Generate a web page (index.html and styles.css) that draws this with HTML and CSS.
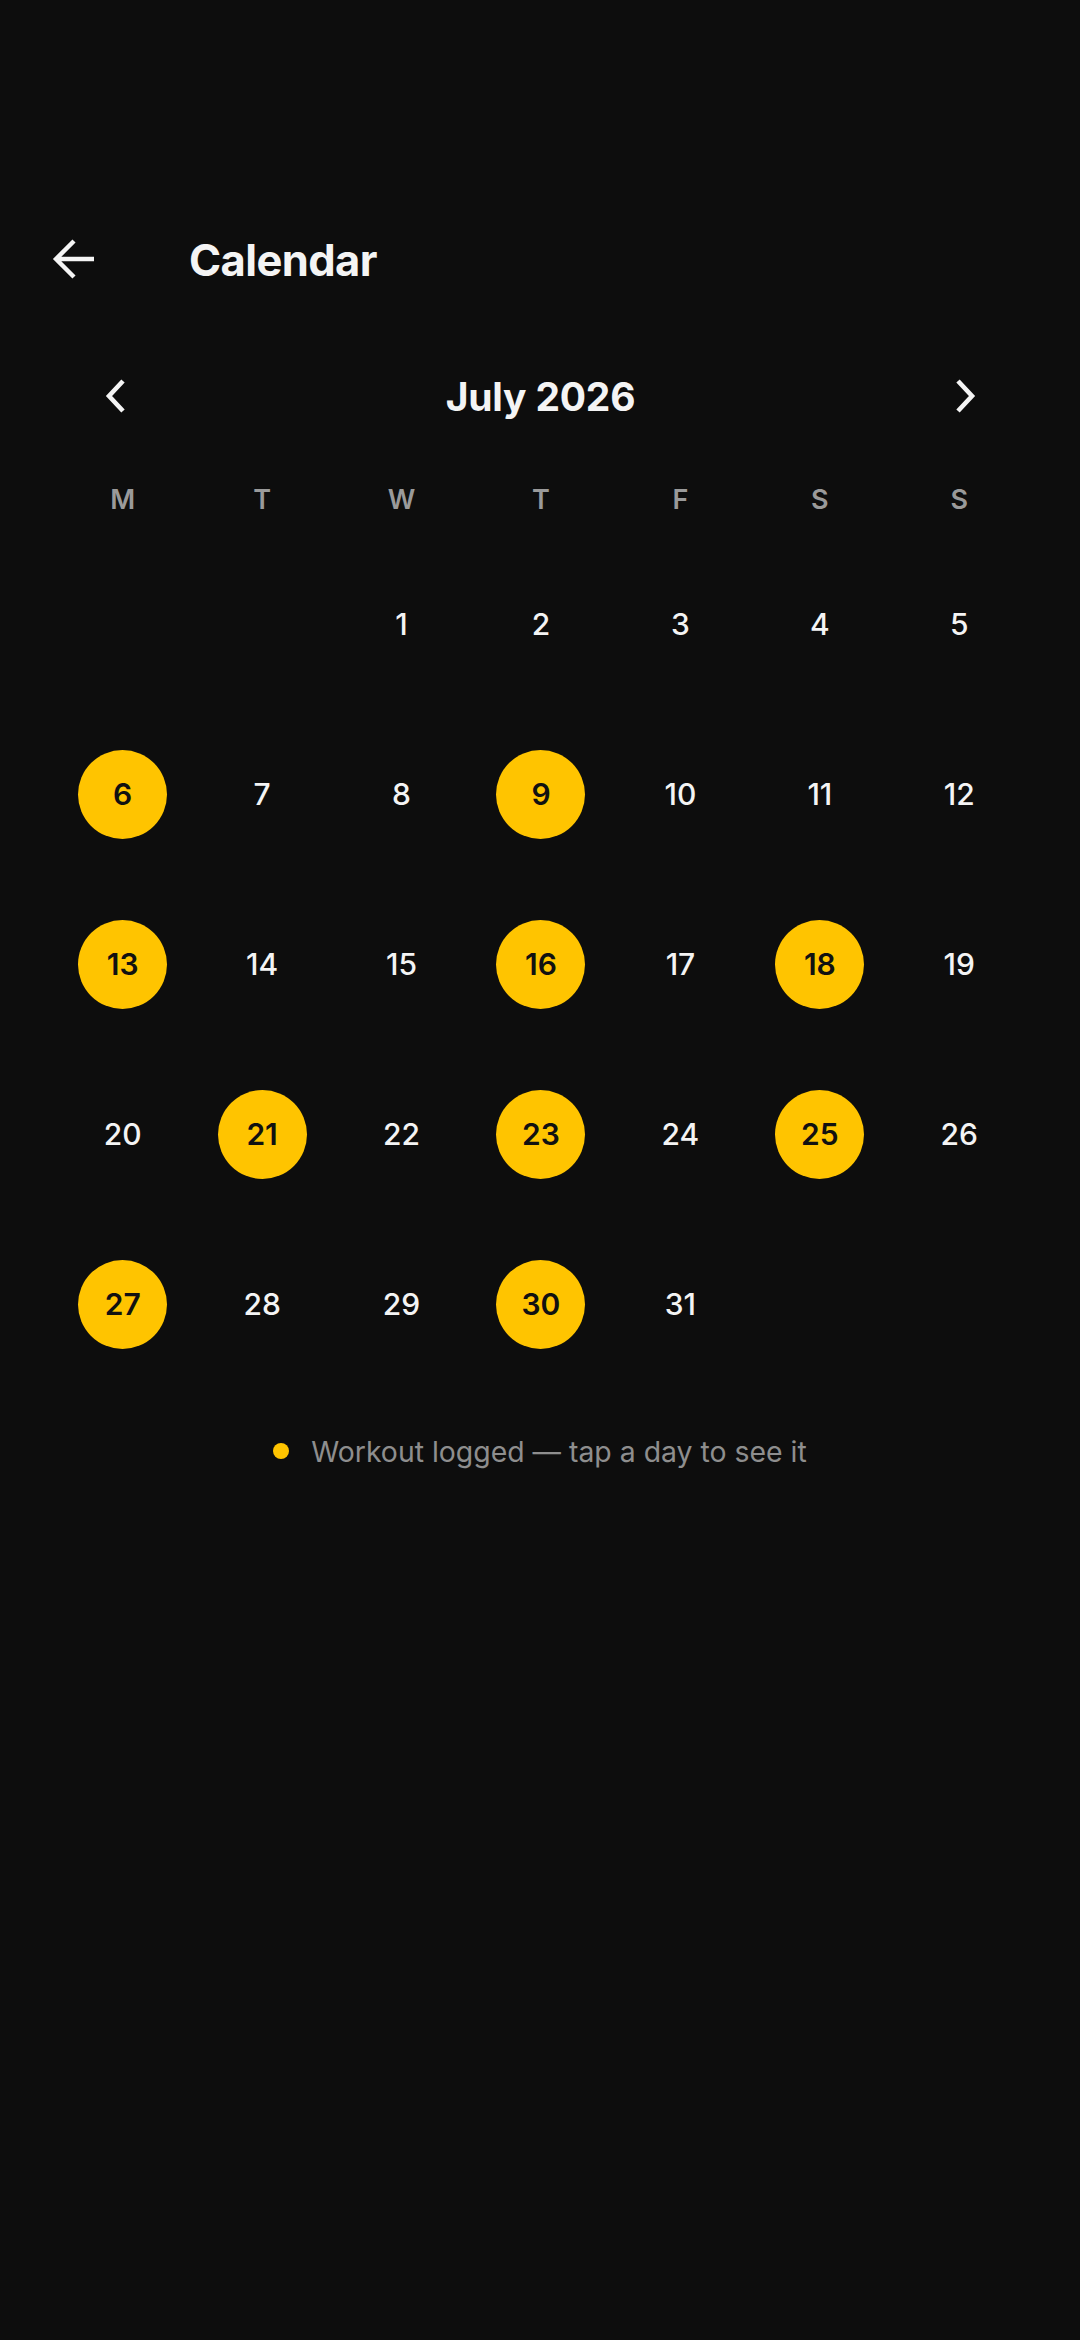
FILE: index.html
```html
<!DOCTYPE html>
<html lang="en">
<head>
<meta charset="utf-8">
<title>Calendar</title>
<link rel="stylesheet" href="styles.css">
</head>
<body>
<div class="screen">
  <header class="topbar">
    <button class="icon-btn back" aria-label="Back">
      <svg width="44" height="44" viewBox="0 0 44 44"><path d="M42 21H4M22 3L4 21l18 18" fill="none" stroke="#f4f4f4" stroke-width="4.4" stroke-linejoin="miter"/></svg>
    </button>
    <h1 class="title">Calendar</h1>
  </header>

  <div class="month-nav">
    <button class="icon-btn" aria-label="Previous month">
      <svg width="24" height="34" viewBox="0 0 24 34"><path d="M20 2L6 17l14 15" fill="none" stroke="#f4f4f4" stroke-width="4.6"/></svg>
    </button>
    <div class="month-label">July 2026</div>
    <button class="icon-btn" aria-label="Next month">
      <svg width="24" height="34" viewBox="0 0 24 34"><path d="M4 2l14 15L4 32" fill="none" stroke="#f4f4f4" stroke-width="4.6"/></svg>
    </button>
  </div>

  <div class="weekdays">
    <span>M</span><span>T</span><span>W</span><span>T</span><span>F</span><span>S</span><span>S</span>
  </div>

  <div class="days">
    <div class="day empty"></div><div class="day empty"></div>
    <div class="day"><span>1</span></div>
    <div class="day"><span>2</span></div>
    <div class="day"><span>3</span></div>
    <div class="day"><span>4</span></div>
    <div class="day"><span>5</span></div>

    <div class="day logged"><span>6</span></div>
    <div class="day"><span>7</span></div>
    <div class="day"><span>8</span></div>
    <div class="day logged"><span>9</span></div>
    <div class="day"><span>10</span></div>
    <div class="day"><span>11</span></div>
    <div class="day"><span>12</span></div>

    <div class="day logged"><span>13</span></div>
    <div class="day"><span>14</span></div>
    <div class="day"><span>15</span></div>
    <div class="day logged"><span>16</span></div>
    <div class="day"><span>17</span></div>
    <div class="day logged"><span>18</span></div>
    <div class="day"><span>19</span></div>

    <div class="day"><span>20</span></div>
    <div class="day logged"><span>21</span></div>
    <div class="day"><span>22</span></div>
    <div class="day logged"><span>23</span></div>
    <div class="day"><span>24</span></div>
    <div class="day logged"><span>25</span></div>
    <div class="day"><span>26</span></div>

    <div class="day logged"><span>27</span></div>
    <div class="day"><span>28</span></div>
    <div class="day"><span>29</span></div>
    <div class="day logged"><span>30</span></div>
    <div class="day"><span>31</span></div>
    <div class="day empty"></div><div class="day empty"></div>
  </div>

  <div class="legend">
    <span class="legend-dot"></span>
    <span class="legend-text">Workout logged — tap a day to see it</span>
  </div>
</div>
</body>
</html>
```

FILE: styles.css
```css
* { box-sizing: border-box; }

html, body {
  margin: 0;
  padding: 0;
  background: #0d0d0d;
}

body {
  font-family: Inter, "Noto Sans", "Liberation Sans", sans-serif;
  color: #f4f4f4;
  width: 1080px;
  min-height: 2340px;
}

.screen {
  padding-top: 210px;
}

.icon-btn {
  background: none;
  border: 0;
  padding: 0;
  margin: 0;
  display: flex;
  align-items: center;
  justify-content: center;
  cursor: pointer;
}

.topbar {
  height: 100px;
  display: flex;
  align-items: center;
  padding: 0 52px;
}

.title {
  margin: 0 0 0 93px;
  font-size: 43.5px;
  font-weight: 700;
  letter-spacing: -0.6px;
  color: #f4f4f4;
}

.month-nav {
  margin-top: 36px;
  height: 100px;
  display: flex;
  align-items: center;
  justify-content: space-between;
  padding: 0 102px 0 103px;
}

.month-label {
  font-size: 39px;
  font-weight: 700;
  letter-spacing: -0.2px;
  color: #f4f4f4;
}

.weekdays {
  margin-top: 33px;
  height: 40px;
  display: grid;
  grid-template-columns: repeat(7, 1fr);
  padding: 0 51px 0 53px;
  align-items: center;
  justify-items: center;
  font-size: 27px;
  font-weight: 600;
  color: #9a9a9a;
}

.days {
  margin-top: 20px;
  display: grid;
  grid-template-columns: repeat(7, 1fr);
  grid-auto-rows: 170px;
  padding: 0 51px 0 53px;
}

.day {
  display: flex;
  align-items: center;
  justify-content: center;
}

.day span {
  width: 89px;
  height: 89px;
  border-radius: 50%;
  display: flex;
  align-items: center;
  justify-content: center;
  font-size: 30px;
  font-weight: 500;
  color: #f4f4f4;
}

.day.logged span {
  background: #ffc400;
  color: #111111;
  font-weight: 600;
}

.legend {
  margin-top: 42px;
  height: 40px;
  display: flex;
  align-items: center;
  justify-content: center;
  gap: 22px;
}

.legend-dot {
  width: 16px;
  height: 16px;
  border-radius: 50%;
  background: #ffc400;
}

.legend-text {
  font-size: 28.4px;
  font-weight: 400;
  color: #8e8e8e;
}
```
